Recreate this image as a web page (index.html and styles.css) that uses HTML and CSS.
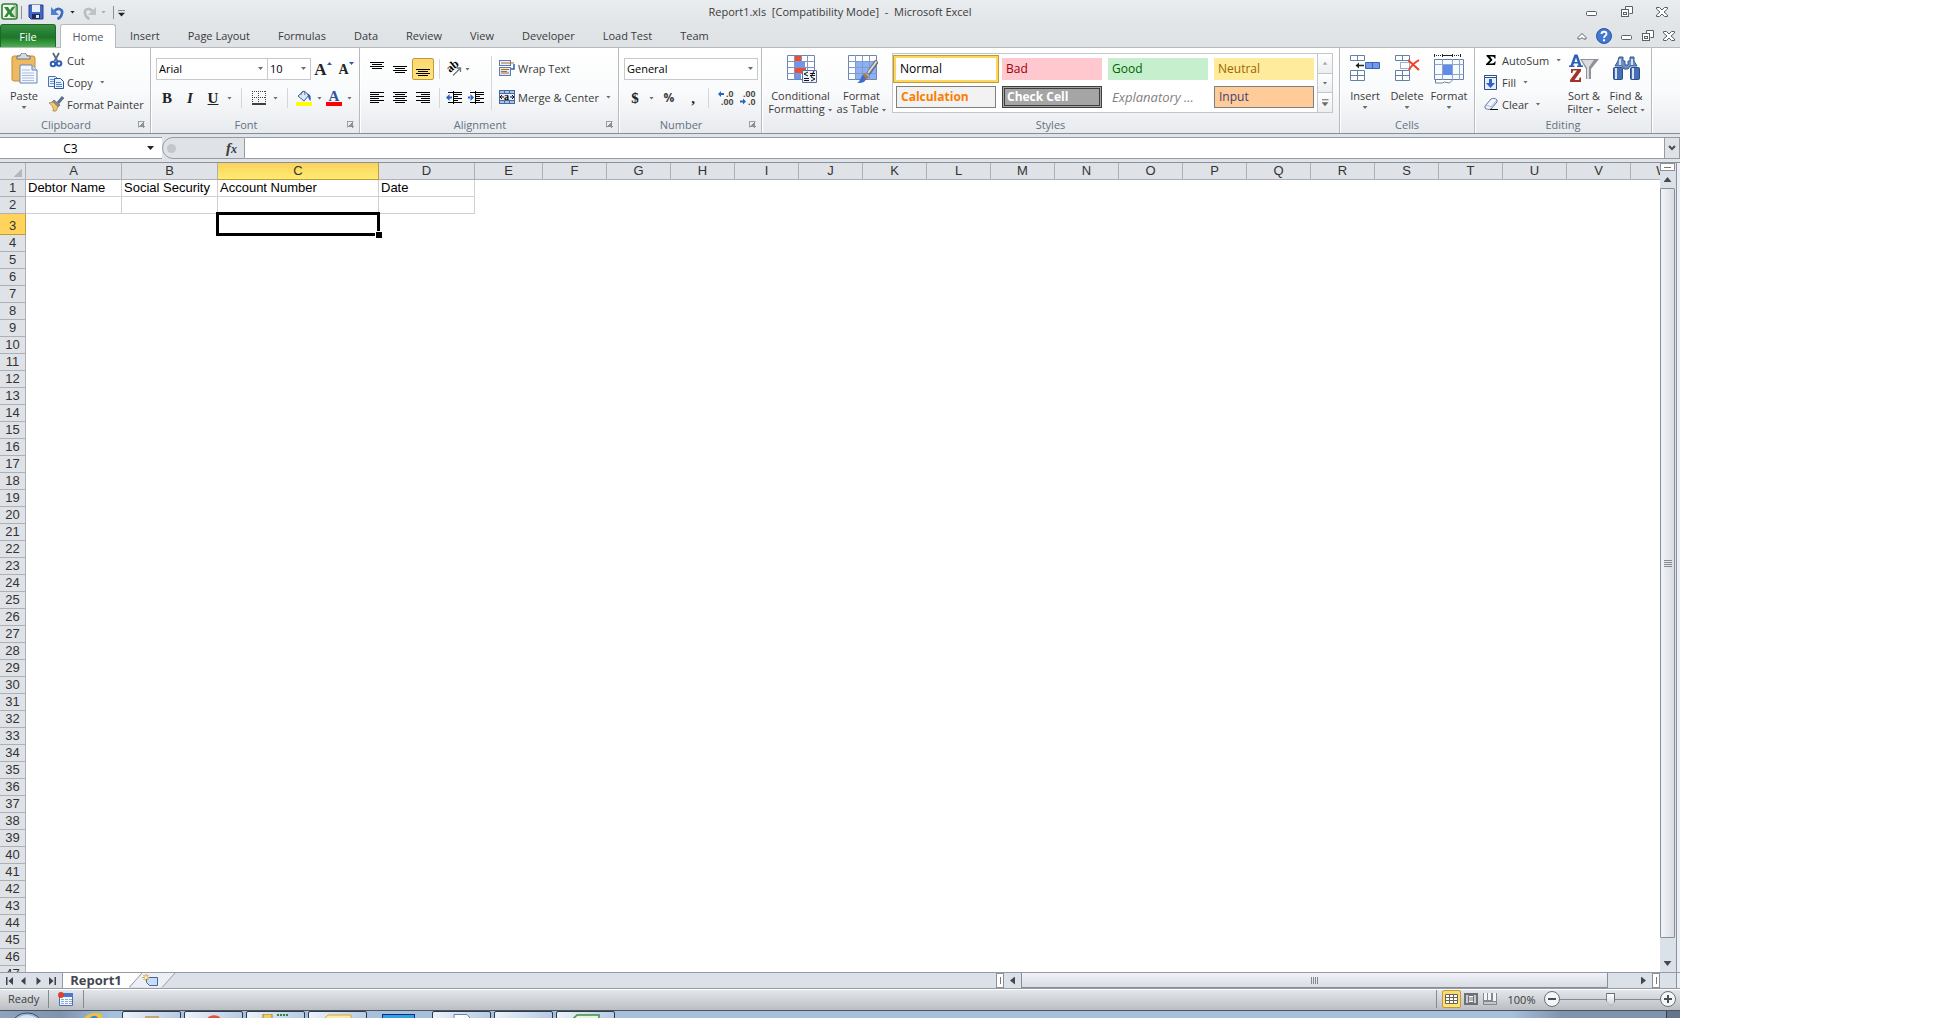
FILE: index.html
```html
<!DOCTYPE html>
<html lang="en">
<head>
<meta charset="utf-8">
<title>Report1.xls [Compatibility Mode] - Microsoft Excel</title>
<link rel="stylesheet" href="styles.css">
</head>
<body>
<div class="app">
<header class="top">
  <div class="titlebar">
    <div class="quick">
      <svg width="18" height="18" viewBox="0 0 18 18"><rect x="1" y="1" width="15" height="15" rx="2" fill="#f4faf2" stroke="#2d7d35" stroke-width="1.6"/><path d="M12 3h3v11h-3" fill="#cfe6c8" stroke="#6aa868"/><path d="M3 4h4l2 3 2-3h3l-3.500 5L14 14h-4l-2-3-2 3H3l3.500-5z" fill="#2f8a3a"/></svg>
      <i class="vline"></i>
      <button type="button" aria-label="Save"><svg width="16" height="16" viewBox="0 0 16 16"><path d="M1 1h14v14H3l-2-2z" fill="#4267c4" stroke="#26408f"/><path d="M4 1h8v7H4z" fill="#e8f0fb"/><path d="M4 10h8v5H4z" fill="#222c52"/><path d="M8 11h3v3H8z" fill="#dbe6f8"/></svg></button>
      <button type="button" aria-label="Undo" class="undo"><svg width="14" height="15" viewBox="0 0 14 15"><path d="M3 6.500C7 2 12 4 11 8.500 10.500 11 9 13 6.500 14" fill="none" stroke="#3c6cc0" stroke-width="2.600"/><path d="M0 2v8h8z" fill="#4f80d0"/></svg><i class="arrow black"></i></button>
      <button type="button" aria-label="Redo" class="undo"><svg width="14" height="15" viewBox="0 0 14 15"><path d="M11 6.500C7 2 2 4 3 8.500 3.500 11 5 13 7.500 14" fill="none" stroke="#b9bcc0" stroke-width="2.600"/><path d="M14 2v8H6z" fill="#bfc2c6"/></svg><i class="arrow pale"></i></button>
      <i class="vline last"></i>
      <button type="button" aria-label="Customize" class="customize"><i class="arrow black barred"></i></button>
    </div>
    <h1>Report1.xls&nbsp; [Compatibility Mode]&nbsp; -&nbsp; Microsoft Excel</h1>
    <div class="winbtns">
      <button type="button" aria-label="Minimize"><svg width="12" height="12" viewBox="0 0 12 12"><rect x=".5" y="5.500" width="10" height="4" rx="1" class="ol"/></svg></button>
      <button type="button" aria-label="Restore"><svg width="12" height="12" viewBox="0 0 12 12"><path d="M4.500 3.500v-3h7v7h-3" class="ol"/><rect x=".5" y="3.500" width="7" height="7" class="ol"/><rect x="2.500" y="6.500" width="3" height="2" class="ol"/></svg></button>
      <button type="button" aria-label="Close"><svg width="12" height="12" viewBox="0 0 12 12"><path d="M.5 1.500h3L6 4l2.500-2.500h3V3L8 6l3.500 3v1.500h-3L6 8l-2.500 2.500h-3V9L4 6 .5 3z" class="ol"/></svg></button>
    </div>
  </div>
  <nav class="tabs">
    <button type="button" class="file">File</button>
    <button type="button" class="tab home">Home</button>
    <button type="button" class="tab">Insert</button>
    <button type="button" class="tab">Page Layout</button>
    <button type="button" class="tab">Formulas</button>
    <button type="button" class="tab">Data</button>
    <button type="button" class="tab">Review</button>
    <button type="button" class="tab">View</button>
    <button type="button" class="tab">Developer</button>
    <button type="button" class="tab">Load Test</button>
    <button type="button" class="tab">Team</button>
    <div class="docbtns">
      <button type="button" aria-label="Collapse ribbon"><svg width="10" height="12" viewBox="0 0 10 12"><path d="M1 7.500L5 3.500l4 4v1.500H6.500L5 7.500 3.500 9H1z" class="ol"/></svg></button>
      <button type="button" aria-label="Help"><svg width="16" height="16" viewBox="0 0 16 16"><circle cx="8" cy="8" r="7.500" fill="#4377d0" stroke="#2c55a8"/><path d="M5.500 6C5.500 3 10.500 3 10.500 6 10.500 7.500 8 8 8 10" fill="none" stroke="#fff" stroke-width="1.800"/><path d="M7 11.300h2v2H7z" fill="#fff"/></svg></button>
      <button type="button" aria-label="Minimize workbook"><svg width="12" height="12" viewBox="0 0 12 12"><rect x=".5" y="5.500" width="10" height="4" rx="1" class="ol"/></svg></button>
      <button type="button" aria-label="Restore workbook"><svg width="12" height="12" viewBox="0 0 12 12"><path d="M4.500 3.500v-3h7v7h-3" class="ol"/><rect x=".5" y="3.500" width="7" height="7" class="ol"/><rect x="2.500" y="6.500" width="3" height="2" class="ol"/></svg></button>
      <button type="button" aria-label="Close workbook"><svg width="12" height="12" viewBox="0 0 12 12"><path d="M.5 1.500h3L6 4l2.500-2.500h3V3L8 6l3.500 3v1.500h-3L6 8l-2.500 2.500h-3V9L4 6 .5 3z" class="ol"/></svg></button>
    </div>
  </nav>
</header>

<section class="ribbon">
  <div class="group g-clip">
    <div class="body">
      <button type="button" class="big paste"><svg width="32" height="32" viewBox="0 0 32 32"><rect x="4" y="3" width="23" height="25" rx="2" fill="#edba62" stroke="#c98d33"/><path d="M9 6V3h3c0-4 7-4 7 0h3v3z" fill="#d8dce2" stroke="#6d7580"/><path d="M12 12h12l5 5v13H12z" fill="#f4f8fe" stroke="#6485b4"/><path d="M24 12v5h5" fill="#cfdef2" stroke="#6485b4"/><path d="M14 17h8M14 20h12M14 22.500h12M14 25h12M14 27.500h12" stroke="#a7bedd"/></svg><span>Paste</span><i class="arrow"></i></button>
      <div class="stack">
        <button type="button" class="small"><svg width="16" height="16" viewBox="0 0 16 16"><path d="M5 1l4.500 8M11 1L6.500 9" stroke="#596a84" stroke-width="1.800"/><circle cx="5" cy="12" r="2.300" fill="none" stroke="#2d5fb8" stroke-width="2"/><circle cx="11" cy="11.500" r="2.300" fill="none" stroke="#2d5fb8" stroke-width="2"/></svg>Cut</button>
        <button type="button" class="small"><svg width="16" height="16" viewBox="0 0 16 16"><path d="M.5 2.500h7l2 2v8h-9z" fill="#e9f1fc" stroke="#4b71b3"/><path d="M2 5.500h4M2 7.500h4M2 9.500h4" stroke="#7195cf"/><path d="M6.500 4.500h6l3 3v7h-9z" fill="#e9f1fc" stroke="#2f559d"/><path d="M8 8.500h5M8 10.500h6M8 12.500h6" stroke="#5c84c6"/></svg>Copy<i class="arrow"></i></button>
        <button type="button" class="small"><svg width="16" height="16" viewBox="0 0 16 16"><path d="M15 1l-5 6" stroke="#5d6f8c" stroke-width="3"/><path d="M6 4l6 5-2 2-6-5z" fill="#848e9e" stroke="#4e586a" stroke-width=".6"/><path d="M1 7l4-1 5 5-2 4-3 0c1-3-1-6-4-8z" fill="#f2c876" stroke="#b4802c" stroke-width=".8"/></svg>Format Painter</button>
      </div>
    </div>
    <footer>Clipboard<i class="launch"></i></footer>
  </div>

  <div class="group g-font">
    <div class="rows">
      <div class="line">
        <label class="combo font-name"><select aria-label="Font"><option>Arial</option></select></label>
        <label class="combo font-size"><select aria-label="Font size"><option>10</option></select></label>
        <button type="button" class="ic letter grow" aria-label="Grow font">A<svg width="5" height="3" viewBox="0 0 5 3"><path d="M0 3L2.500 0 5 3z" fill="#2f5aa8"/></svg></button>
        <button type="button" class="ic letter shrink" aria-label="Shrink font">A<svg width="5" height="3" viewBox="0 0 5 3"><path d="M0 0h5L2.500 3z" fill="#2f5aa8"/></svg></button>
      </div>
      <div class="line font-line">
        <button type="button" class="ic letter">B</button>
        <button type="button" class="ic letter ital">I</button>
        <button type="button" class="ic letter under">U</button><i class="arrow"></i>
        <i class="sep"></i>
        <button type="button" class="ic" aria-label="Borders"><svg width="14" height="14" viewBox="0 0 14 14"><path d="M.5 0v12M6.500 0v12M13.500 0v12M0 .5h14M0 6.500h14" stroke="#444" stroke-dasharray="1 1"/><path d="M0 13h14" stroke="#000" stroke-width="1.500"/></svg></button><i class="arrow"></i>
        <i class="sep"></i>
        <button type="button" class="ic fill-ic" aria-label="Fill color"><svg width="16" height="16" viewBox="0 0 16 16"><path d="M2 6l6-5 5 4-5 6z" fill="#dfe8f6" stroke="#3d5f9f"/><path d="M5 5c0-5 4-5 4 0" fill="none" stroke="#5b6b85"/><path d="M11 4c4 0 4 3 3.500 7-1.500-1-2-3-2.500-5z" fill="#2a5bb5"/><path d="M0 12h16v4H0z" fill="#ff0"/></svg></button><i class="arrow"></i>
        <button type="button" class="ic fontcolor" aria-label="Font color">A</button><i class="arrow"></i>
      </div>
    </div>
    <footer>Font<i class="launch"></i></footer>
  </div>

  <div class="group g-align">
    <div class="body">
      <div class="align-grid">
        <button type="button" class="ic" aria-label="Top"><svg width="14" height="14" viewBox="0 0 14 14"><path d="M0 .5h14M2 2.500h10M0 4.500h14M2 6.500h10" class="ln"/></svg></button>
        <button type="button" class="ic" aria-label="Middle"><svg width="14" height="14" viewBox="0 0 14 14"><path d="M0 4.500h14M2 6.500h10M0 8.500h14M2 10.500h10" class="ln"/></svg></button>
        <button type="button" class="ic on" aria-label="Bottom"><svg width="14" height="14" viewBox="0 0 14 14"><path d="M0 7.500h14M2 9.500h10M0 11.500h14M2 13.500h10" class="ln"/></svg></button>
        <button type="button" class="ic" aria-label="Left"><svg width="14" height="14" viewBox="0 0 14 14"><path d="M0 1.500h14M0 3.500h9M0 5.500h14M0 7.500h9M0 9.500h14M0 11.500h9" class="ln"/></svg></button>
        <button type="button" class="ic" aria-label="Center"><svg width="14" height="14" viewBox="0 0 14 14"><path d="M0 1.500h14M2 3.500h10M0 5.500h14M2 7.500h10M0 9.500h14M2 11.500h10" class="ln"/></svg></button>
        <button type="button" class="ic" aria-label="Right"><svg width="14" height="14" viewBox="0 0 14 14"><path d="M0 1.500h14M5 3.500h9M0 5.500h14M5 7.500h9M0 9.500h14M5 11.500h9" class="ln"/></svg></button>
      </div>
      <div class="rows indent">
        <div class="line"><i class="sep"></i><button type="button" class="ic orient" aria-label="Orientation"><svg width="16" height="16" viewBox="0 0 16 16"><text font-size="12" font-weight="700" transform="translate(4 12) rotate(-40)" class="icon-serif">ab</text><path d="M7 14.500l7-7M10.500 7H14.500V11" fill="none" stroke="#777" stroke-width="1.300"/></svg></button><i class="arrow"></i></div>
        <div class="line"><i class="sep"></i><button type="button" class="ic" aria-label="Decrease indent"><svg width="16" height="14" viewBox="0 0 16 14"><path d="M2 1.500h14M7 3.500h9M7 5.500h5M7 7.500h9M7 9.500h5M2 11.500h14" class="ln"/><path d="M7.500 0v14" stroke="#000" stroke-dasharray="1 1"/><path d="M0 6.500L3.500 3v7zM3 5.500h3v2H3z" fill="#2b63c2"/></svg></button><button type="button" class="ic" aria-label="Increase indent"><svg width="16" height="14" viewBox="0 0 16 14"><path d="M2 1.500h14M7 3.500h9M7 5.500h5M7 7.500h9M7 9.500h5M2 11.500h14" class="ln"/><path d="M7.500 0v14" stroke="#000" stroke-dasharray="1 1"/><path d="M6 6.500L2.500 3v7zM0 5.500h3v2H0z" fill="#2b63c2"/></svg></button></div>
      </div>
      <i class="sep tall"></i>
      <div class="rows">
        <button type="button" class="small line"><svg width="16" height="16" viewBox="0 0 16 16"><rect x=".5" y=".5" width="11" height="5" fill="#eef3fb" stroke="#5c7bb0"/><path d="M2 3h13" stroke="#b36a25"/><rect x=".5" y="7.500" width="11" height="8" fill="#dfe9f8" stroke="#5c7bb0"/><path d="M2 9.500h8M2 11.500h6M2 13h8" stroke="#b36a25"/><path d="M15 4v5h-3" fill="none" stroke="#2a5fae" stroke-width="1.500"/></svg>Wrap Text</button>
        <button type="button" class="small line"><svg width="16" height="16" viewBox="0 0 16 16"><rect x=".5" y="1.500" width="15" height="13" fill="#a9c3e8" stroke="#46689e"/><path d="M0 4.500h16M0 11.500h16M5.500 1v3M10.500 1v3M5.500 12v3M10.500 12v3" stroke="#46689e"/><path d="M1 5h14v6H1z" fill="#e9f0fa"/><path d="M1 8h4M11 8h4M3 6L1 8l2 2M13 6l2 2-2 2" fill="none" stroke="#111"/><text x="5" y="11" font-size="10" font-weight="700" class="icon-serif">a</text></svg>Merge &amp; Center<i class="arrow"></i></button>
      </div>
    </div>
    <footer>Alignment<i class="launch"></i></footer>
  </div>

  <div class="group g-num">
    <div class="rows">
      <div class="line"><label class="combo number-format"><select aria-label="Number format"><option>General</option></select></label></div>
      <div class="line num-line">
        <button type="button" class="ic letter">$</button><i class="arrow"></i>
        <button type="button" class="ic pct">%</button>
        <button type="button" class="ic letter comma">,</button>
        <i class="sep"></i>
        <button type="button" class="ic" aria-label="Increase decimal"><svg width="16" height="16" viewBox="0 0 16 16"><path d="M0 4l3-3v2h3v2H3v2z" fill="#2b63c2"/><text x="8" y="7" class="dec">.0</text><text x="3" y="15" class="dec">.00</text></svg></button>
        <button type="button" class="ic" aria-label="Decrease decimal"><svg width="16" height="16" viewBox="0 0 16 16"><path d="M6 11.500l-3-3v2H0v2h3v2z" fill="#2b63c2"/><text x="3" y="7" class="dec">.00</text><text x="8" y="15" class="dec">.0</text></svg></button>
      </div>
    </div>
    <footer>Number<i class="launch"></i></footer>
  </div>

  <div class="group g-styles">
    <div class="body">
      <button type="button" class="big wide"><svg width="32" height="32" viewBox="0 0 32 32"><path d="M2.500 2.500h27v24h-27z" fill="#fff" stroke="#6c86b2"/><path d="M9 3h7v5H9zM9 14h12v6H9z" fill="#ee4c33"/><path d="M9 8h11v6H9zM9 20h7v6H9z" fill="#6f98ea"/><path d="M2.500 8.500h27M2.500 14.500h27M2.500 20.500h27M9.500 2v25M16.500 2v6M22.500 2v25" stroke="#8297bb"/><path d="M17.500 17.500h14v12h-14z" fill="#eef4fd" stroke="#5a7098"/><path d="M23 19l-4 2 4 2M19 25.500h5M19 27.500h5M25 20.500h5M25 22.500h5M29 18l-3 6M26 24l4 2-4 2" fill="none" stroke="#111"/></svg><span>Conditional<br>Formatting <i class="arrow"></i></span></button>
      <button type="button" class="big wide"><svg width="32" height="32" viewBox="0 0 32 32"><path d="M2.500 2.500h28v24h-28z" fill="#fff" stroke="#6c86b2"/><path d="M9 8h21v18H9z" fill="#8db1f4"/><path d="M2.500 8.500h28M2.500 14.500h28M2.500 20.500h28M9.500 2v25M16.500 2v25M23.500 2v25" stroke="#7f9bcb"/><path d="M31 8L22 21" stroke="#6c7075" stroke-width="4.500"/><path d="M30.500 8.500L22 20" stroke="#d7dadd" stroke-width="2"/><path d="M18 20l5 4-3 3-4-4z" fill="#b5783a"/><path d="M17 22l3 4c-1 4-5 4-9 4 4-2 3-6 6-8z" fill="#3d6fcf"/></svg><span>Format<br>as Table <i class="arrow"></i></span></button>
      <div class="gallery">
        <div class="tiles">
          <button type="button" class="tile normal">Normal</button>
          <button type="button" class="tile bad">Bad</button>
          <button type="button" class="tile good">Good</button>
          <button type="button" class="tile neutral">Neutral</button>
          <button type="button" class="tile calc">Calculation</button>
          <button type="button" class="tile check">Check Cell</button>
          <button type="button" class="tile expl">Explanatory ...</button>
          <button type="button" class="tile input">Input</button>
        </div>
        <div class="gscroll">
          <button type="button" aria-label="Scroll up"><i class="arrow up pale"></i></button>
          <button type="button" aria-label="Scroll down"><i class="arrow"></i></button>
          <button type="button" aria-label="More styles"><i class="arrow barred"></i></button>
        </div>
      </div>
    </div>
    <footer>Styles</footer>
  </div>

  <div class="group g-cells">
    <div class="body">
      <button type="button" class="big"><svg width="32" height="32" viewBox="0 0 32 32"><path d="M1.500 2.500h14v5h-14zM8.500 2.500v5M1.500 17.500h14v10h-14zM1.500 22.500h14M8.500 17.500v10" fill="#fff" stroke="#6681a8"/><path d="M16.500 9.500h14v6h-14zM23.500 9.500v6" fill="#6f9cea" stroke="#3c62ab"/><path d="M8 12.500h7" stroke="#222" stroke-width="1.500"/><path d="M6.500 12.500L10 9.500v6z" fill="#222"/></svg><span>Insert</span><i class="arrow"></i></button>
      <button type="button" class="big"><svg width="32" height="32" viewBox="0 0 32 32"><path d="M4.500 2.500h14v5h-14zM11.500 2.500v5M4.500 17.500h14v10h-14zM4.500 22.500h14M11.500 17.500v10" fill="#fff" stroke="#6681a8"/><path d="M9.500 9.500h9v6h-9z" fill="none" stroke="#365fae" stroke-dasharray="1 1"/><path d="M17 7l11 10M28 7c-5 3-8 6-10 10" fill="none" stroke="#ee4126" stroke-width="2"/></svg><span>Delete</span><i class="arrow"></i></button>
      <button type="button" class="big"><svg width="32" height="32" viewBox="0 0 32 32"><path d="M1 2.500h27" stroke="#222" stroke-dasharray="1 1"/><path d="M1.500 1v3M9.500 1v3M19.500 1v3M27.500 1v3M10 2.500h9" stroke="#222"/><path d="M1.500 6.500h29v20h-29z" fill="#f7faff" stroke="#6681a8"/><path d="M1.500 11.500h29M1.500 21.500h29M9.500 6v21M19.500 6v21M26.500 6v21" stroke="#8fa6c9"/><path d="M10 12h9v10h-9z" fill="#5d8ceb"/><path d="M2.500 27v3h7l2-1 5 1 3-3" fill="#fff" stroke="#6681a8"/></svg><span>Format</span><i class="arrow"></i></button>
    </div>
    <footer>Cells</footer>
  </div>

  <div class="group g-edit">
    <div class="body">
      <div class="stack">
        <button type="button" class="small"><svg width="16" height="16" viewBox="0 0 16 16"><path d="M3.500 3h9v3.500h-1C11 4.800 10.500 4.600 7 4.600L9.500 8 6 11.600c4 0 5 0 5.800-2h1L12 13H3v-1l4-4-3.500-4z" fill="#000"/></svg>AutoSum<i class="arrow"></i></button>
        <button type="button" class="small"><svg width="16" height="16" viewBox="0 0 16 16"><path d="M1.500 1.500h12v14h-12z" fill="#e4eefc" stroke="#2d4f8f"/><path d="M1.500 1.500h12v2h-12z" fill="#fff" stroke="#2d4f8f"/><path d="M6 5h3v4h3l-4.500 5L3 9h3z" fill="#2e62c8"/></svg>Fill<i class="arrow"></i></button>
        <button type="button" class="small"><svg width="16" height="16" viewBox="0 0 16 16"><path d="M2 10l6-7c2-1 4-1 6 1v2l-6 7c-2 1-5 0-6-1z" fill="#f3f7fd" stroke="#5f779f"/><path d="M2 10c2-1 4 0 6 1l6-7" fill="none" stroke="#9bb0d2"/><path d="M7 13.500h8" stroke="#111"/></svg>Clear<i class="arrow"></i></button>
      </div>
      <button type="button" class="big"><svg width="32" height="32" viewBox="0 0 32 32"><path d="M12 6h19L23 16v10h-5V16z" fill="#8f9296"/><path d="M14 7h12l-5 7v12h-2V15z" fill="#dadcde"/><path d="M1 14v-1.500h1.500L6.500 1.500h3l4 11H15V14H9v-1.500h1.500L10 10.500H6L5 12.500h1.500V14zM6.500 9h3L8 4.500z" fill="#2f5fb5"/><path d="M3 16h10v2L6.500 27H11l.5-2.500H13V29H2v-2l7-9.500H5L4.500 20H3z" fill="#a33329"/></svg><span>Sort &amp;<br>Filter <i class="arrow"></i></span></button>
      <button type="button" class="big"><svg width="32" height="32" viewBox="0 0 32 32"><path d="M9 4h4v4h2v4h3V8h2V4h4v4l3 5h-7l-2 3h-4l-2-3H5l3-5z" fill="#6e8fc4" stroke="#36568f"/><rect x="3.500" y="14.500" width="9" height="12" rx="1" fill="#466fb5" stroke="#2e4c85"/><rect x="20.500" y="14.500" width="9" height="12" rx="1" fill="#466fb5" stroke="#2e4c85"/><path d="M6 15v11M23 15v11M10 6v6M22 6v6" stroke="#d5e2f6" stroke-width="2"/></svg><span>Find &amp;<br>Select <i class="arrow"></i></span></button>
    </div>
    <footer>Editing</footer>
  </div>
</section>

<div class="formula">
  <label class="namebox"><input type="text" value="C3" aria-label="Name box"><i class="arrow black"></i></label>
  <div class="fx"><i class="knob"></i><button type="button"><em>f</em><small>x</small></button></div>
  <input type="text" class="fx-input" aria-label="Formula">
  <button type="button" class="expand" aria-label="Expand formula bar"><svg width="8" height="6" viewBox="0 0 8 6"><path d="M1 1l3 3 3-3" fill="none" stroke="#474d55" stroke-width="2"/></svg></button>
</div>

<main class="sheet">
  <div class="cells">
    <table>
      <colgroup><col class="c-head"><col class="c-96"><col class="c-96"><col class="c-161"><col class="c-96"><col class="c-68"><col span="18" class="c-64"></colgroup>
      <thead><tr><th class="corner"></th><th>A</th><th>B</th><th class="sel">C</th><th>D</th><th>E</th><th>F</th><th>G</th><th>H</th><th>I</th><th>J</th><th>K</th><th>L</th><th>M</th><th>N</th><th>O</th><th>P</th><th>Q</th><th>R</th><th>S</th><th>T</th><th>U</th><th>V</th><th>W</th></tr></thead>
      <tbody>
        <tr><th>1</th><td>Debtor Name</td><td>Social Security</td><td>Account Number</td><td>Date</td></tr>
        <tr><th>2</th><td></td><td></td><td></td><td></td></tr>
        <tr class="current"><th>3</th><td></td><td></td><td class="active"></td></tr>
        <tr><th>4</th></tr><tr><th>5</th></tr><tr><th>6</th></tr><tr><th>7</th></tr><tr><th>8</th></tr><tr><th>9</th></tr><tr><th>10</th></tr>
        <tr><th>11</th></tr><tr><th>12</th></tr><tr><th>13</th></tr><tr><th>14</th></tr><tr><th>15</th></tr><tr><th>16</th></tr><tr><th>17</th></tr><tr><th>18</th></tr><tr><th>19</th></tr><tr><th>20</th></tr>
        <tr><th>21</th></tr><tr><th>22</th></tr><tr><th>23</th></tr><tr><th>24</th></tr><tr><th>25</th></tr><tr><th>26</th></tr><tr><th>27</th></tr><tr><th>28</th></tr><tr><th>29</th></tr><tr><th>30</th></tr>
        <tr><th>31</th></tr><tr><th>32</th></tr><tr><th>33</th></tr><tr><th>34</th></tr><tr><th>35</th></tr><tr><th>36</th></tr><tr><th>37</th></tr><tr><th>38</th></tr><tr><th>39</th></tr><tr><th>40</th></tr>
        <tr><th>41</th></tr><tr><th>42</th></tr><tr><th>43</th></tr><tr><th>44</th></tr><tr><th>45</th></tr><tr><th>46</th></tr><tr><th>47</th></tr>
      </tbody>
    </table>
  </div>
  <div class="vscroll">
    <i class="split"></i>
    <button type="button" aria-label="Up"><i class="tri up"></i></button>
    <div class="thumb"><i class="grip"></i></div>
    <button type="button" aria-label="Down"><i class="tri down"></i></button>
  </div>
</main>

<div class="sheetbar">
  <div class="nav">
    <button type="button" aria-label="First sheet"><svg width="7" height="8" viewBox="0 0 7 8"><path d="M0 0h1.500v8H0zM7 0v8L2.500 4z"/></svg></button>
    <button type="button" aria-label="Previous sheet"><svg width="7" height="8" viewBox="0 0 7 8"><path d="M5.500 0v8L1 4z"/></svg></button>
    <button type="button" aria-label="Next sheet"><svg width="7" height="8" viewBox="0 0 7 8"><path d="M1.500 0v8L6 4z"/></svg></button>
    <button type="button" aria-label="Last sheet"><svg width="7" height="8" viewBox="0 0 7 8"><path d="M5.500 0H7v8H5.500zM0 0v8l4.500-4z"/></svg></button>
  </div>
  <button type="button" class="sheet-tab">Report1</button>
  <button type="button" class="new-tab" aria-label="Insert worksheet"><svg width="48" height="15" viewBox="0 0 48 15"><path d="M0 0h13L0 15z" fill="#fff"/><path d="M2 14L13 0h33L33 14.500z" fill="#eceff4"/><path d="M0 14.500L13 0M46 0L33 14.500" stroke="#969ba3"/><path d="M17.500 4.500h11v8h-8l-3-3z" fill="#c9dcf5" stroke="#43669f"/><path d="M17 1v7M13.500 4.500h7M14.500 2l5 5M19.500 2l-5 5" stroke="#d09024"/><circle cx="17" cy="4.500" r="1.500" fill="#fff2c0"/></svg></button>
  <div class="hscroll">
    <i class="split"></i>
    <button type="button" aria-label="Left"><i class="tri left"></i></button>
    <div class="track"><div class="thumb"><i class="grip"></i></div></div>
    <button type="button" aria-label="Right"><i class="tri right"></i></button>
    <i class="split"></i>
  </div>
  <i class="scroll-corner"></i>
</div>

<footer class="status">
  <span class="ready">Ready</span>
  <button type="button" class="macro" aria-label="Record macro"><svg width="16" height="15" viewBox="0 0 16 15"><path d="M1.500 1.500h13v12h-13z" fill="#f4f8fe" stroke="#4c70b5"/><path d="M1 1h14v4H1z" fill="#4a78cc"/><path d="M3 7.500h3M7 7.500h3M11 7.500h3M3 9.500h3M7 9.500h3M11 9.500h3M3 11.500h3M7 11.500h3M11 11.500h3" stroke="#8fa8d2"/><circle cx="3" cy="3" r="3" fill="#d8432a"/></svg></button>
  <div class="zoombar">
    <button type="button" class="view on" aria-label="Normal view"><svg width="13" height="11" viewBox="0 0 13 11"><path d="M.5.500h12v9H.5zM0 3.500h13M0 6.500h13M4.500 0v10M8.500 0v10" fill="#fff" stroke="#68644f"/></svg></button>
    <button type="button" class="view" aria-label="Page layout view"><svg width="14" height="12" viewBox="0 0 14 12"><path d="M1 1h12v10H1z" fill="#c9cdd2" stroke="#6c7177" stroke-width="2"/><path d="M4.500 2.500h5v7h-5zM5 5h4M5 7h4" fill="#fff" stroke="#6c7177"/></svg></button>
    <button type="button" class="view" aria-label="Page break view"><svg width="14" height="12" viewBox="0 0 14 12"><path d="M0 0h14v12H0z" fill="#85898e"/><path d="M1 0h3v7H1zM5 0h3v7H5zM10 0h3v8h-3z" fill="#f4f5f7"/><path d="M1 9h12v2H1z" fill="#c3c7cb"/></svg></button>
    <span class="pct-text">100%</span>
    <button type="button" class="round" aria-label="Zoom out"><svg width="16" height="16" viewBox="0 0 16 16"><circle cx="8" cy="8" r="7.500" fill="#f5f6f8" stroke="#6b7077"/><path d="M4 8h8" stroke="#4b5057" stroke-width="2"/></svg></button>
    <input type="range" min="0" max="100" value="51" aria-label="Zoom">
    <button type="button" class="round" aria-label="Zoom in"><svg width="16" height="16" viewBox="0 0 16 16"><circle cx="8" cy="8" r="7.500" fill="#f5f6f8" stroke="#6b7077"/><path d="M4 8h8M8 4v8" stroke="#4b5057" stroke-width="2"/></svg></button>
  </div>
</footer>

<div class="taskbar">
  <div class="start"><svg width="119" height="7" viewBox="0 0 119 7"><ellipse cx="27" cy="12" rx="14" ry="10" fill="#9db7d6" stroke="#35506f"/><ellipse cx="27" cy="10" rx="10" ry="6" fill="#d4e1ef"/><path d="M84 7c5-6 15-6 18-3v3h-4c-3-3-6-2-9 0z" fill="#f2c230"/><path d="M90 7c3-3 6-3 8 0z" fill="#3e86d4"/></svg></div>
  <div class="task"><svg width="20" height="5" viewBox="0 0 20 5"><path d="M3 2h14v3H3z" fill="#c2a77e"/></svg></div>
  <div class="task"><svg width="20" height="5" viewBox="0 0 20 5"><path d="M3 5c2-5 12-5 14 0z" fill="#e2533b"/></svg></div>
  <div class="task"><svg width="28" height="5" viewBox="0 0 28 5"><path d="M1 0h9v5H1z" fill="#e9cf6c" stroke="#a3862c"/><path d="M15 1h12" stroke="#2b8a36" stroke-width="2" stroke-dasharray="2 1"/></svg></div>
  <div class="task"><svg width="28" height="5" viewBox="0 0 28 5"><path d="M0 5l4-4h23v4z" fill="#fce9ae" stroke="#e0a42c"/></svg></div>
  <div class="pinned"><i></i></div>
  <div class="task"><svg width="20" height="5" viewBox="0 0 20 5"><path d="M2 5V.5h13L18 4v1" fill="#fff" stroke="#6583ad"/></svg></div>
  <div class="task"></div>
  <div class="task"><svg width="28" height="5" viewBox="0 0 28 5"><path d="M1 5l4-4h22v4z" fill="#e6f3e0" stroke="#3d9140" stroke-width="1.500"/></svg></div>
  <div class="desktop"></div>
</div>
</div>
</body>
</html>
```
FILE: styles.css
```css
* { box-sizing: border-box; }
html, body { margin: 0; background: #fff; }
body { padding-right: 271px; font: 11px/13px "Open Sans", "Noto Sans", sans-serif; color: #3b3b3b; }
button { border: 0; margin: 0; padding: 0; background: none; font: inherit; color: inherit; }
svg { display: block; flex: none; }
select, input { font: inherit; color: #000; margin: 0; border: 0; outline: 0; }
.app { display: flex; flex-direction: column; height: 100vh; overflow: hidden; }

/* shared glyphs */
.arrow { display: inline-block; flex: none; width: 5px; height: 3px; background: #6a6c70; clip-path: polygon(0 0, 100% 0, 50% 100%); }
.arrow.black { background: #222; }
.arrow.pale { background: #a8abaf; }
.arrow.up { clip-path: polygon(0 100%, 50% 0, 100% 100%); }
.arrow.barred { width: 7px; height: 7px; clip-path: polygon(0 0, 100% 0, 100% 15%, 0 15%, 0 45%, 100% 45%, 50% 100%, 0 45%); }
.ol { fill: #fff; stroke: #5a5f69; }
.ln { stroke: #000; fill: none; }
.icon-serif { font-family: "Liberation Serif", serif; }
.dec { font: 700 9px "Liberation Sans", sans-serif; fill: #444; }

/* title and tabs */
.top { background: linear-gradient(#e9edf0, #e2e5e8 24px, #dfe3e6); border-bottom: 1px solid #b6babf; flex: none; }
.titlebar { height: 24px; display: grid; grid-template-columns: 1fr auto 1fr; align-items: center; }
.titlebar h1 { margin: 0; font: 11px/14px "Open Sans", sans-serif; }
.quick { display: flex; align-items: center; gap: 6px; padding-left: 1px; }
.quick .vline { width: 1px; height: 13px; background: #8d9196; margin-left: -4px; }
.quick .vline.last { margin-left: 1px; }
.customize { margin-left: -2px; }
.undo { display: flex; align-items: center; gap: 5px; margin-left: 1px; }
.winbtns { display: flex; justify-content: flex-end; gap: 23px; padding-right: 12px; }
.tabs { display: flex; height: 23px; align-items: stretch; }
.file { width: 56px; color: #fff; border: 1px solid #1c6a25; border-bottom: 0; border-radius: 3px 3px 0 0; background: linear-gradient(#389144, #1d7529 55%, #4db04e); }
.tab { padding: 0 14px; }
.home { width: 56px; padding: 0; margin: 0 0 -1px 4px; background: #fff; border: 1px solid #b6babf; border-bottom: 0; border-radius: 3px 3px 0 0; color: #525865; z-index: 1; }
.docbtns { margin-left: auto; display: flex; align-items: center; gap: 9px; padding-right: 5px; }

/* ribbon */
.ribbon { display: flex; flex: none; background: linear-gradient(#fff, #fafbfc 50%, #e7eaee); border-bottom: 1px solid #888d93; overflow: hidden; }
.group { flex: none; border-right: 1px solid #b6babf; box-shadow: 1px 0 #fff; height: 85px; display: flex; flex-direction: column; }
.group > footer { height: 17px; display: grid; justify-items: center; align-items: center; color: #66707f; margin-top: auto; }
.group > footer:has(.launch) { grid-template-columns: 1fr 18px; }
.launch { width: 7px; height: 7px; border: 1px solid #9a9ea5; border-right-color: transparent; border-bottom-color: transparent; background: linear-gradient(135deg, transparent 50%, #8c9097 50%); }
.body { display: flex; height: 68px; }
.g-clip { width: 151px; }
.g-font { width: 209px; }
.g-align { width: 259px; }
.g-num { width: 143px; }
.g-styles { width: 578px; }
.g-cells { width: 135px; }
.g-edit { width: 177px; }
.big { width: 42px; padding-top: 5px; display: flex; flex-direction: column; align-items: center; gap: 4px; white-space: nowrap; }
.big .arrow { vertical-align: middle; }
.big.wide { width: 61px; }
.paste { width: 48px; }
.stack { display: flex; flex-direction: column; padding-top: 2px; }
.stack .small { height: 22px; }
.small { display: flex; align-items: center; gap: 3px; white-space: nowrap; padding-bottom: 2px; }
.small .arrow { margin-left: 4px; }
.rows { display: flex; flex-direction: column; gap: 7px; padding-top: 10px; height: 68px; }
.line { display: flex; align-items: center; height: 22px; }
.combo { position: relative; display: block; height: 22px; }
.combo select { width: 100%; height: 22px; appearance: none; border: 1px solid #c6c9cd; background: #fff; padding: 0 2px 2px; border-radius: 0; }
.combo::after { content: ""; position: absolute; right: 5px; top: 9px; width: 5px; height: 3px; background: #6a6c70; clip-path: polygon(0 0, 100% 0, 50% 100%); }
.font-name { width: 112px; margin-left: 5px; }
.font-size { width: 44px; margin-left: -1px; }
.number-format { width: 134px; margin-left: 5px; }
.ic { display: flex; align-items: center; justify-content: center; width: 22px; height: 22px; flex: none; }
.letter { font: 700 15px/16px "Liberation Serif", serif; color: #222; }
.ital { font-style: italic; }
.under { text-decoration: underline; }
.grow { font-size: 17px; align-items: flex-start; margin-left: 1px; padding-top: 4px; }
.shrink { font-size: 14px; align-items: flex-start; margin-left: 1px; padding-top: 4px; }
.font-line { padding-left: 5px; gap: 1px; }
.font-line .arrow { margin: 0 2px; }
.sep { width: 1px; height: 20px; background: #d3d6da; margin: 0 4px; flex: none; }
.font-line .sep { margin: 0 5px 0 6px; }
.fill-ic { width: 20px; }
.fontcolor { width: 16px; height: 16px; margin: 0 2px 0 1px; font: 700 15px/13px "Liberation Serif", serif; color: #2f5597; border-bottom: 4px solid #f00; }
.align-grid { display: grid; grid-template-columns: repeat(3, 22px); gap: 7px 1px; padding: 10px 0 7px 6px; }
.on { background: linear-gradient(#fbd873, #ffe47a); border: 1px solid #c29a38; border-radius: 2px; }
.indent { padding-left: 2px; width: 56px; }
.indent .sep { margin: 0 3px; }
.tall { height: 54px; margin: 8px 7px 0 1px; }
.num-line { padding-left: 5px; }
.num-line .ic:first-child { margin-right: 3px; }
.num-line .arrow { margin-right: 4px; }
.num-line .comma { margin-left: 2px; }
.num-line .sep { margin-right: 6px; }
.pct { font: 700 12px/14px "Open Sans", sans-serif; }
.g-styles .body { padding-left: 8px; }
.gallery { display: flex; width: 441px; height: 60px; margin-top: 5px; background: #fff; border: 1px solid #c3c6ca; }
.tiles { display: grid; grid-template-columns: repeat(4, 100px); grid-template-rows: 22px 22px; gap: 6px; padding: 4px 3px; width: 425px; }
.tile { text-align: left; padding-left: 4px; font-size: 12px; line-height: 14px; color: #000; white-space: nowrap; }
.normal { outline: 2px solid #ffd65c; outline-offset: 0; box-shadow: 0 0 0 3px #c29a38; }
.bad { background: #ffc7ce; color: #9c0006; }
.good { background: #c6efce; color: #006100; }
.neutral { background: #ffeb9c; color: #9c6500; }
.calc { background: #f2f2f2; color: #fa7d00; border: 1px solid #7f7f7f; font-weight: 700; }
.check { background: #a5a5a5; color: #fff; border: 3px double #3f3f3f; padding-left: 2px; font-weight: 700; }
.expl { color: #7f7f7f; font-style: italic; font-size: 13px; }
.input { background: #ffcc99; color: #3f3f76; border: 1px solid #7f7f7f; }
.gscroll { display: flex; flex-direction: column; border-left: 1px solid #c3c6ca; width: 15px; }
.gscroll button { flex: 1; display: flex; align-items: center; justify-content: center; background: linear-gradient(#fff, #eceef1); }
.gscroll button + button { border-top: 1px solid #c3c6ca; }
.g-cells .body { padding-left: 4px; }
.g-edit .body { padding-left: 8px; }
.g-edit .stack { width: 80px; }

/* formula bar */
.formula { flex: none; display: flex; height: 29px; padding: 3px 0; background: #dfe3ea; border-bottom: 1px solid #8c9197; }
.formula > * { height: 22px; border: solid #969ba1; border-width: 1px 0; }
.namebox { width: 162px; display: flex; align-items: center; background: #fff; padding-right: 8px; }
.namebox input { width: 141px; margin-right: 6px; text-align: center; font-size: 12px; background: none; }
.namebox .arrow { width: 7px; height: 4px; }
.formula .fx { width: 83px; display: flex; align-items: center; justify-content: space-between; padding: 0 7px 0 4px; background: #dfe3e8; border-left-width: 1px; border-right-width: 1px; border-radius: 11px 0 0 11px; }
.knob { width: 9px; height: 9px; border-radius: 50%; background: #c2c7cc; }
.fx button { font: italic 700 15px/16px "Liberation Serif", serif; }
.fx small { font-size: 12px; }
.fx-input { flex: 1; min-width: 0; background: #fff; }
.formula .expand { width: 16px; border: 1px solid #969ba1; display: flex; align-items: center; justify-content: center; background: #dfe3e8; }

/* worksheet */
.sheet { flex: 1; min-height: 0; display: flex; background: #fff; }
.cells { flex: 1; min-width: 0; overflow: hidden; }
table { table-layout: fixed; width: 1695px; border-collapse: separate; border-spacing: 0; font: 13px/16px "Liberation Sans", sans-serif; color: #000; }
.c-head { width: 26px; }
.c-96 { width: 96px; }
.c-161 { width: 161px; }
.c-68 { width: 68px; }
.c-64 { width: 64px; }
tr { height: 17px; }
th, td { height: 17px; padding: 0; white-space: nowrap; }
th { font-weight: 400; color: #333; background: #dfe2e7; border: solid #adb1b6; border-width: 0 1px 1px 0; text-align: center; }
td { text-align: left; padding-left: 2px; border: solid #d0d0d0; border-width: 0 1px 1px 0; }
.corner { background: linear-gradient(135deg, transparent 50%, #b5b9be 50%) 14px 6px / 8px 8px no-repeat #dfe2e7; }
.sel { background: linear-gradient(#fbd25c, #ffec73); border-color: #c29a38; }
.current th, .current td { height: 21px; vertical-align: bottom; }
.current th { background: #ffd35c; border-color: #c29a38; }
.current td { border: 0; }
.active { position: relative; }
.active::before { content: ""; position: absolute; inset: -2px -1px -1px -2px; border: 3px solid #000; }
.active::after { content: ""; position: absolute; right: -3px; bottom: -3px; width: 6px; height: 6px; background: #000; border: solid #fff; border-width: 1px 0 0 1px; }

/* scrollbars */
.tri { width: 8px; height: 5px; background: #45494e; }
.tri.up { clip-path: polygon(0 100%, 50% 0, 100% 100%); }
.tri.down { clip-path: polygon(0 0, 100% 0, 50% 100%); }
.tri.left { width: 5px; height: 8px; clip-path: polygon(100% 0, 0 50%, 100% 100%); }
.tri.right { width: 5px; height: 8px; clip-path: polygon(0 0, 100% 50%, 0 100%); }
.vscroll { flex: none; width: 20px; padding-right: 3px; display: flex; flex-direction: column; background: linear-gradient(90deg, #dbe1e8 16px, #8c9198 16px, #8c9198 17px, #eceef6 17px); }
.vscroll .split { height: 8px; width: 15px; border: 1px solid #8c9197; background: #fff; display: flex; align-items: center; justify-content: center; }
.vscroll .split::after { content: ""; width: 7px; height: 1px; background: #777; }
.vscroll button { height: 17px; width: 15px; display: flex; align-items: center; justify-content: center; }
.vscroll button:last-child { height: 34px; align-items: flex-end; padding-bottom: 6px; }
.vscroll .thumb { flex: 1; width: 15px; border: 1px solid #868f99; border-radius: 1px; background: linear-gradient(90deg, #f2f4f8, #d9dce2); display: flex; align-items: center; justify-content: center; }
.vscroll .grip { width: 8px; height: 7px; background: repeating-linear-gradient(#85898f 0 1px, transparent 1px 2px); }
.sheetbar { flex: none; display: flex; height: 17px; background: #dce0e8; border: solid #969ba3; border-width: 1px 0; }
.nav { width: 63px; display: flex; align-items: center; justify-content: space-between; padding: 0 6px; border-right: 1px solid #969ba3; fill: #3f4248; }
.sheet-tab { width: 66px; background: #fff; font-size: 13px; line-height: 15px; font-weight: 700; color: #44474f; }
.hscroll { flex: none; width: 664px; margin-left: auto; display: flex; background: #dbe1e8; }
.hscroll .split { width: 8px; border: 1px solid #8c9197; background: #fff; display: flex; align-items: center; justify-content: center; }
.hscroll .split::after { content: ""; width: 1px; height: 7px; background: #777; }
.hscroll button { width: 17px; display: flex; align-items: center; justify-content: center; }
.hscroll .track { flex: 1; padding-right: 27px; display: flex; }
.hscroll .thumb { flex: 1; border: 1px solid #868f99; border-top: 0; background: linear-gradient(#f2f3fa, #d9dce2); display: flex; align-items: center; justify-content: center; }
.hscroll .grip { width: 7px; height: 7px; background: repeating-linear-gradient(90deg, #85898f 0 1px, transparent 1px 2px); }
.scroll-corner { width: 20px; background: linear-gradient(90deg, #dbe1e8 16px, #8c9198 16px, #8c9198 17px, #eceef6 17px); }

/* status bar */
.status { flex: none; height: 22px; padding-bottom: 2px; display: flex; align-items: center; border-top: 1px solid #fff; border-bottom: 1px solid #4b545e; background: linear-gradient(#e3e6ea, #bbbec2); }
.ready { width: 49px; padding-left: 8px; border-right: 1px solid #868a8f; line-height: 18px; }
.macro { width: 35px; height: 18px; padding-left: 9px; border-right: 1px solid #868a8f; }
.zoombar { margin-left: auto; height: 18px; padding: 0 4px 0 5px; display: flex; align-items: center; border-left: 1px solid #868a8f; }
.view { height: 18px; width: 19px; display: flex; align-items: center; justify-content: center; }
.pct-text { width: 45px; text-align: center; }
.zoombar input { appearance: none; width: 100px; height: 13px; background: linear-gradient(#868b91, #868b91) 0 6px / 100% 1px no-repeat; }
.zoombar input::-webkit-slider-thumb { appearance: none; width: 9px; height: 13px; background: linear-gradient(#fff, #cfd3d8) padding-box, #6b7077; border: 1px solid #6b7077; clip-path: polygon(0 0, 100% 0, 100% 65%, 50% 100%, 0 65%); }

/* taskbar */
.taskbar { flex: none; height: 7px; display: flex; overflow: hidden; background: linear-gradient(90deg, #8fa3bb, #7e93ae 60px, #a5bfdd 110px, #a5bfdd 90%, #7f93ad 93%, #7f93ad); gap: 3px; }
.start { width: 119px; flex: none; }
.task { width: 59px; flex: none; height: 12px; padding-top: 2px; display: flex; align-items: flex-start; justify-content: center; border: 1px solid #2c3a4c; border-radius: 2px; background: linear-gradient(120deg, #edf3fa, #b3c8e0); }
.pinned { width: 59px; flex: none; padding: 3px 0 0 12px; }
.pinned i { display: block; width: 33px; height: 4px; background: #2fa3dc; border: 1px solid #15288a; border-bottom: 0; }
.desktop { width: 14px; margin-left: auto; background: #66768a; border-left: 1px solid #333f4d; }
```
